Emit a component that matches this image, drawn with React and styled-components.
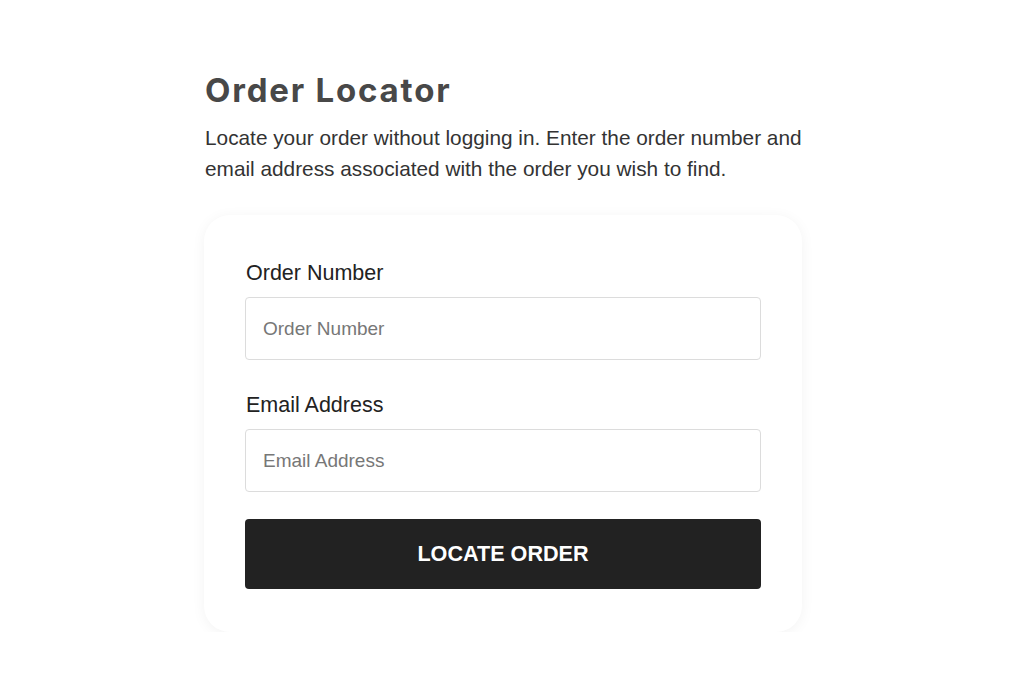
import React from "react";
import styled, { createGlobalStyle } from "styled-components";

const GlobalStyle = createGlobalStyle`
  * {
    margin: 0;
    padding: 0;
    box-sizing: border-box;
  }
  body {
    background: #fff;
    font-family: "Liberation Sans", Arial, sans-serif;
  }
`;

const Page = styled.main`
  width: 598px;
  margin-left: 204px;
  padding-top: 68px;
`;

const Title = styled.h1`
  font-family: Inter, Lato, sans-serif;
  font-weight: 700;
  font-size: 33px;
  line-height: 44px;
  color: #484848;
  letter-spacing: 1.8px;
  margin-left: 1px;
`;

const Intro = styled.p`
  margin-top: 10px;
  font-size: 20.8px;
  line-height: 31px;
  color: #333;
  margin-left: 1px;
`;

const Card = styled.form`
  margin-top: 31px;
  background: #fff;
  border-radius: 26px;
  box-shadow: 0 2px 14px rgba(0, 0, 0, 0.05);
  padding: 46px 41px 43px;
  display: flex;
  flex-direction: column;
`;

const Field = styled.div`
  display: flex;
  flex-direction: column;
  margin-bottom: ${(p) => (p.$last ? "27px" : "33px")};
`;

const Label = styled.label`
  font-size: 21.5px;
  line-height: 24px;
  color: #222;
  margin-bottom: 12px;
  margin-left: 1px;
`;

const Input = styled.input`
  height: 63px;
  border: 1px solid #dcdcdc;
  border-radius: 4px;
  padding: 0 17px;
  font-family: "Liberation Sans", Arial, sans-serif;
  font-size: 19px;
  color: #222;
  outline: none;
  &::placeholder {
    color: #777;
  }
`;

const Button = styled.button`
  height: 70px;
  background: #222;
  color: #fff;
  border: none;
  border-radius: 4px;
  font-family: "Liberation Sans", Arial, sans-serif;
  font-weight: 700;
  font-size: 21.6px;
  text-transform: uppercase;
  cursor: pointer;
`;

export default function App() {
  return (
    <Page>
      <GlobalStyle />
      <Title>Order Locator</Title>
      <Intro>
        Locate your order without logging in. Enter the order number and
        email address associated with the order you wish to find.
      </Intro>
      <Card onSubmit={(e) => e.preventDefault()}>
        <Field>
          <Label htmlFor="order">Order Number</Label>
          <Input id="order" placeholder="Order Number" />
        </Field>
        <Field $last>
          <Label htmlFor="email">Email Address</Label>
          <Input id="email" placeholder="Email Address" />
        </Field>
        <Button type="submit">Locate Order</Button>
      </Card>
    </Page>
  );
}
